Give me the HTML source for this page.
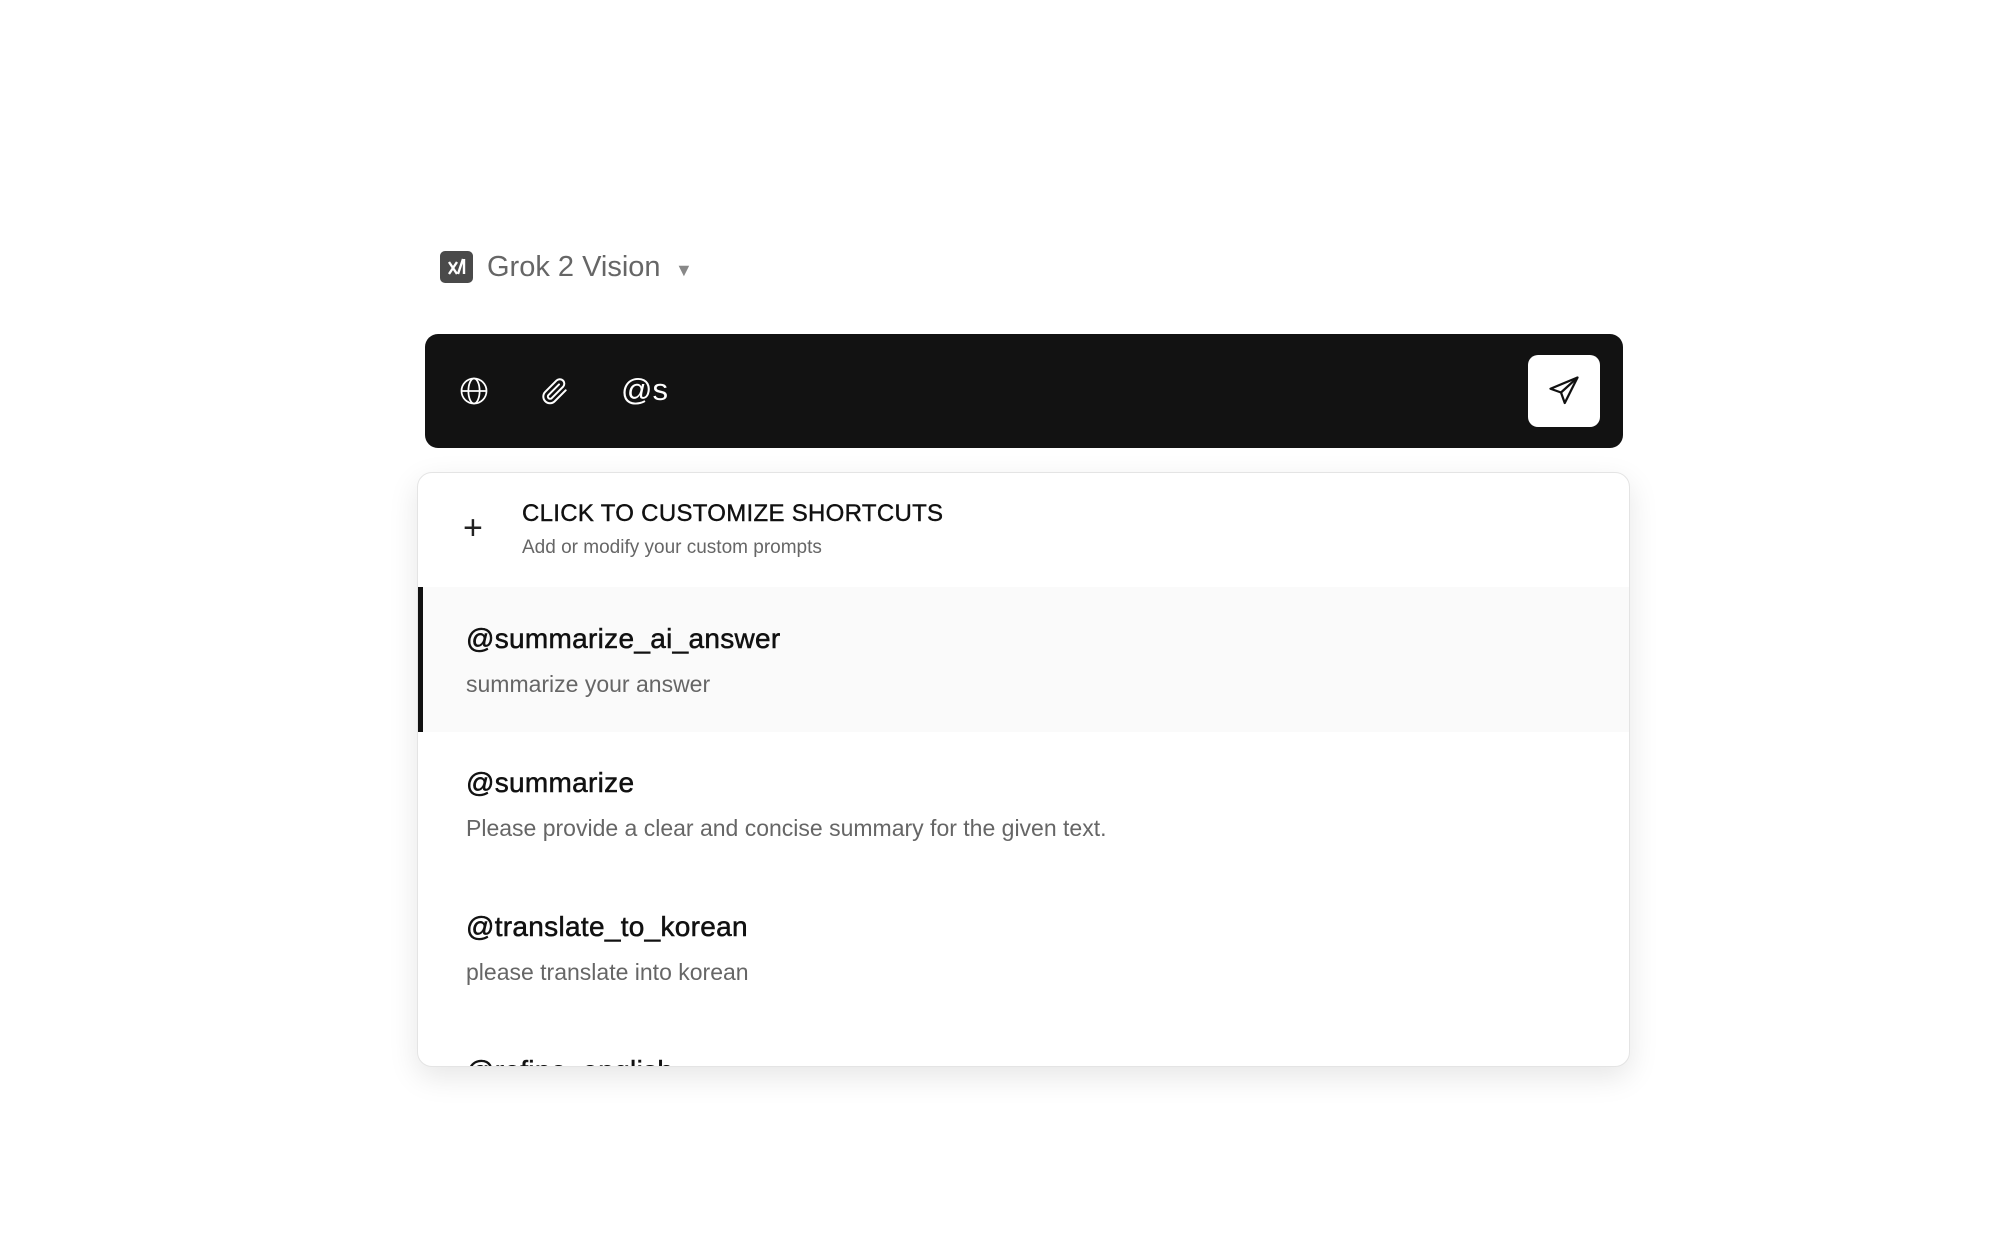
<!DOCTYPE html>
<html><head><meta charset="utf-8"><style>
*{margin:0;padding:0;box-sizing:border-box}
body{width:1998px;height:1238px;background:#fff;font-family:"Liberation Sans",Arial,sans-serif;position:relative;overflow:hidden}
.a{position:absolute;white-space:nowrap}
.logo{left:440px;top:251px;width:33px;height:32px;background:#4a4a4a;border-radius:5px}
.bar{left:425px;top:334px;width:1198px;height:114px;background:#121212;border-radius:13px}
.send{left:1528px;top:355px;width:72px;height:72px;background:#fff;border-radius:10px}
.panel{left:417px;top:472px;width:1213px;height:595px;background:#fff;border:1.5px solid #e4e4e4;border-radius:15px;overflow:hidden;box-shadow:0 10px 30px rgba(0,0,0,.10)}
.t{font-size:28px;color:#111;letter-spacing:.3px;-webkit-text-stroke:.5px #111}
.d{font-size:23px;color:#666}
</style></head><body>
<div class="a logo"></div>
<svg class="a" style="left:440px;top:251px" width="33" height="32" viewBox="0 0 33 32" fill="none" stroke="#fff" stroke-width="2.4"><path d="M9 11l8 12M17 11l-8 12M23 8l-5 15M24 8v15"/></svg>
<div class="a" style="left:487px;top:251px;font-size:29px;color:#666">Grok 2 Vision</div>
<div class="a" style="left:675px;top:260px;font-size:18px;color:#888">▼</div>
<div class="a bar"></div>
<svg class="a" style="left:459px;top:376px" width="30" height="30" viewBox="0 0 24 24" fill="none" stroke="#fff" stroke-width="1.4"><circle cx="12" cy="12" r="10"/><ellipse cx="12" cy="12" rx="4.5" ry="10"/><line x1="2" y1="12" x2="22" y2="12"/></svg>
<svg class="a" style="left:539px;top:375px" width="32" height="32" viewBox="0 0 24 24" fill="none" stroke="#fff" stroke-width="1.5" stroke-linecap="round"><path d="M20 11.5l-8.2 8.2a5 5 0 0 1-7.1-7.1l8.6-8.6a3.4 3.4 0 0 1 4.8 4.8l-8.6 8.6a1.7 1.7 0 0 1-2.4-2.4l7.9-7.9"/></svg>
<div class="a" style="left:621px;top:372px;font-size:31px;color:#fff">@s</div>
<div class="a send"></div>
<svg class="a" style="left:1546px;top:373px" width="36" height="36" viewBox="0 0 24 24" fill="none" stroke="#111" stroke-width="1.5" stroke-linejoin="round"><path d="M21 3L3 10.5l7 2.5 2.5 7z"/><path d="M21 3L10 13"/></svg>
<div class="a panel">
<div class="a" style="left:45px;top:36px;font-size:34px;color:#222;font-weight:300">+</div>
<div class="a" style="left:104px;top:27px;font-size:24px;color:#111;letter-spacing:.3px;-webkit-text-stroke:.4px #111">CLICK TO CUSTOMIZE SHORTCUTS</div>
<div class="a" style="left:104px;top:64px;font-size:19px;color:#666">Add or modify your custom prompts</div>
<div class="a" style="left:0;top:114px;width:1218px;height:145px;background:#fafafa;border-left:5px solid #111"></div>
<div class="a t" style="left:48px;top:150px">@summarize_ai_answer</div>
<div class="a d" style="left:48px;top:198px">summarize your answer</div>
<div class="a t" style="left:48px;top:294px">@summarize</div>
<div class="a d" style="left:48px;top:342px">Please provide a clear and concise summary for the given text.</div>
<div class="a t" style="left:48px;top:438px">@translate_to_korean</div>
<div class="a d" style="left:48px;top:486px">please translate into korean</div>
<div class="a t" style="left:48px;top:582px">@refine_english</div>
</div>
</body></html>
